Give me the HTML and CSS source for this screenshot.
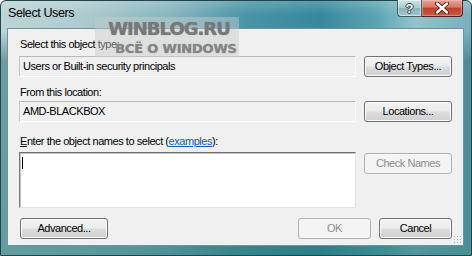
FILE: index.html
```html
<!DOCTYPE html>
<html>
<head>
<meta charset="utf-8">
<title>Select Users</title>
<link rel="stylesheet" href="styles.css">
</head>
<body>
<div class="window">
  <div class="titlebar">
    <span class="title">Select Users</span>
    <div class="caption">
      <div class="cbtn help"><span class="qmark">?</span></div>
      <div class="cbtn close">
        <svg width="16" height="12" viewBox="0 0 16 12">
          <path d="M3 1.5 L13 10.5 M13 1.5 L3 10.5" stroke="#4a1a12" stroke-width="4.2" stroke-linecap="round"/>
          <path d="M3 1.5 L13 10.5 M13 1.5 L3 10.5" stroke="#ffffff" stroke-width="2.4" stroke-linecap="round"/>
        </svg>
      </div>
    </div>
  </div>
  <div class="client">
    <div class="lbl lbl1">Select this object type:</div>
    <div class="row">
      <div class="field">Users or Built-in security principals</div>
      <button class="btn side">Object Types...</button>
    </div>
    <div class="lbl lbl2">From this location:</div>
    <div class="row">
      <div class="field">AMD-BLACKBOX</div>
      <button class="btn side">Locations...</button>
    </div>
    <div class="lbl lbl3"><u>E</u>nter the object names to select (<a class="link" href="#">examples</a>):</div>
    <div class="row top">
      <div class="textarea"><span class="caret"></span></div>
      <button class="btn side check" disabled>Check Names</button>
    </div>
    <div class="row bottom">
      <button class="btn adv">Advanced...</button>
      <div class="spacer"></div>
      <button class="btn ok" disabled>OK</button>
      <button class="btn cancel">Cancel</button>
    </div>
    <div class="grip"></div>
  </div>
  <div class="watermark">
    <div class="wm1">WINBLOG.RU</div>
    <div class="wm2">ВСЁ О WINDOWS</div>
  </div>
</div>
</body>
</html>
```
FILE: styles.css
```css
html, body {
  margin: 0;
  padding: 0;
  background: #ffffff;
  overflow: hidden;
}

.window {
  position: relative;
  width: 472px;
  height: 256px;
  box-sizing: border-box;
  border: 1px solid #23434c;
  border-radius: 6px 6px 0 0;
  background:
    linear-gradient(180deg, rgba(255,255,255,0.18) 0px, rgba(255,255,255,0) 14px, rgba(0,0,0,0) 30px, rgba(40,110,120,0.55) 60px, rgba(40,120,125,0.6) 100%),
    linear-gradient(90deg, #bcd4d6 0%, #b0ccd0 16%, #86b6bf 36%, #4895a6 52%, #36889b 68%, #5aa5b4 80%, #93c3ca 88%, #78b0bb 100%);
  display: flex;
  flex-direction: column;
  font-family: "Liberation Sans", Arial, sans-serif;
  font-size: 11px;
  letter-spacing: -0.45px;
  color: #000;
}

.titlebar {
  height: 27px;
  display: flex;
  align-items: flex-start;
  flex: none;
}

.title {
  padding: 5px 0 0 7px;
  font-size: 12.5px;
  letter-spacing: -0.4px;
  line-height: 15px;
  color: #000;
}

.caption {
  margin-left: auto;
  margin-right: 8px;
  display: flex;
  margin-top: -1px;
}

.cbtn {
  height: 17px;
  box-sizing: border-box;
  display: flex;
  align-items: center;
  justify-content: center;
}

.help {
  width: 25px;
  border: 1px solid #3b5d64;
  border-top: none;
  border-radius: 0 0 0 4px;
  background: linear-gradient(180deg, #cfe3e5 0%, #a9cad0 48%, #86b5bd 52%, #a2c8ce 100%);
  box-shadow: inset 0 0 0 1px rgba(255,255,255,0.45);
}

.qmark {
  font-family: "Liberation Sans", Arial, sans-serif;
  font-weight: bold;
  font-size: 13px;
  line-height: 13px;
  color: #ffffff;
  letter-spacing: 0;
  text-shadow: 1px 0 0 #2c3f44, -1px 0 0 #2c3f44, 0 1px 0 #2c3f44, 0 -1px 0 #2c3f44;
}

.close {
  width: 41px;
  border: 1px solid #4e231c;
  border-top: none;
  border-left: none;
  border-radius: 0 0 4px 0;
  background: linear-gradient(180deg, #e6a497 0%, #d47865 44%, #bf422c 52%, #c85a40 100%);
  box-shadow: inset 0 0 0 1px rgba(255,210,200,0.4);
}

.client {
  position: relative;
  margin: 0 7px 0 6px;
  height: 218px;
  box-sizing: border-box;
  border: 1px solid #6f939b;
  background: #f0f0f0;
  padding: 7px 11px 0 11px;
  display: flex;
  flex-direction: column;
}

.lbl {
  height: 16px;
  line-height: 16px;
  margin-left: 1px;
  white-space: nowrap;
}

.lbl1 { margin-bottom: 4px; }
.lbl2 { margin-top: 7px; margin-bottom: 1px; }
.lbl3 { margin-top: 11px; margin-bottom: 3px; }

.link {
  color: #0b5cc5;
  text-decoration: underline;
}

.row {
  display: flex;
  align-items: center;
  gap: 8px;
}

.row.top { align-items: flex-start; }

.field {
  width: 337px;
  height: 21px;
  box-sizing: border-box;
  border: 1px solid;
  border-color: #b9b9b9 #fbfbfb #fdfdfd #c6c6c6;
  background: #f0f0f0;
  padding: 0 3px;
  line-height: 19px;
  white-space: nowrap;
}

.textarea {
  position: relative;
  width: 337px;
  height: 56px;
  box-sizing: border-box;
  border: 1px solid;
  border-color: #6e6e6e #e4e4e4 #e4e4e4 #7a7a7a;
  box-shadow: inset 1px 1px 0 #c4c4c4;
  background: #ffffff;
}

.caret {
  position: absolute;
  left: 2px;
  top: 4px;
  width: 1px;
  height: 12px;
  background: #000;
}

.btn {
  height: 21px;
  box-sizing: border-box;
  border: 1px solid #707070;
  border-radius: 3px;
  background: linear-gradient(180deg, #f3f3f3 0%, #ebebeb 48%, #dddddd 52%, #cfcfcf 100%);
  box-shadow: inset 0 0 0 1px #fbfbfb;
  font-family: "Liberation Sans", Arial, sans-serif;
  font-size: 11px;
  letter-spacing: -0.45px;
  color: #000;
  padding: 0;
  margin: 0;
  line-height: 19px;
  text-align: center;
}

.btn:disabled {
  border-color: #adb2b5;
  background: #f4f4f4;
  box-shadow: none;
  color: #8d8d8d;
}

.side { width: 88px; }
.check { margin-top: 1px; }

.bottom {
  margin-top: 10px;
  gap: 0;
}

.adv {
  width: 88px;
  margin-left: 1px;
}

.spacer { flex: 1; }

.ok { width: 73px; }
.cancel { width: 73px; margin-left: 8px; }

.grip {
  position: absolute;
  right: 2px;
  bottom: 2px;
  width: 8px;
  height: 8px;
  background-image: radial-gradient(circle, #a9a9a9 0.8px, transparent 1px);
  background-size: 3px 3px;
}

.watermark {
  position: absolute;
  left: 94px;
  top: 16px;
  width: 144px;
  height: 40px;
  background: rgba(200, 204, 204, 0.45);
  font-family: "DejaVu Sans", sans-serif;
  font-weight: bold;
  color: #7a7a7a;
  text-align: center;
  letter-spacing: 0;
}

.wm1 {
  font-size: 18px;
  line-height: 20px;
  letter-spacing: -1px;
  margin-top: 2px;
  margin-left: 4px;
  color: #787878;
  text-shadow: 0 0 1px rgba(110,110,110,0.8);
}

.wm2 {
  font-size: 13px;
  line-height: 15px;
  letter-spacing: -0.2px;
  margin-top: 2px;
  margin-left: 18px;
  color: #858585;
  text-shadow: 0 0 1px rgba(120,120,120,0.8);
}
```
